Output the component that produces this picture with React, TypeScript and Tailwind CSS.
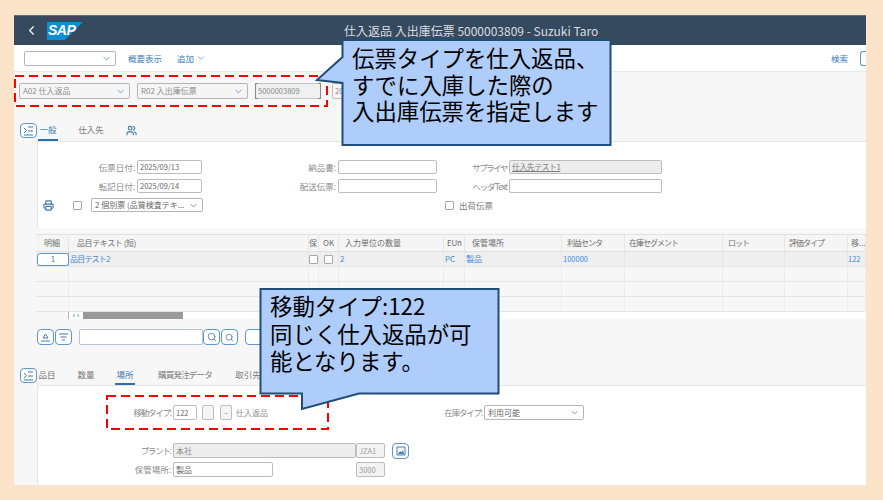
import { ChevronDown, ChevronLeft, Printer, Search, Users } from "lucide-react";

const cjk = "font-['Noto_Sans_CJK_JP','Noto_Sans',sans-serif]";

function Select({ value, className }: { value: string; className: string }) {
  return (
    <div className={`flex h-full shrink-0 items-center justify-between rounded-[2px] border border-[#b5b5b5] px-[3px] ${className}`}>
      <span className="truncate text-[8px] leading-[10px]">{value}</span>
      <ChevronDown className="h-[11px] w-[11px] shrink-0 text-[#427cac]" strokeWidth={1.5} />
    </div>
  );
}

function Input({ value, className, link, num }: { value?: string; className: string; link?: boolean; num?: boolean }) {
  return (
    <div className={`flex h-full shrink-0 items-center rounded-[2px] border border-[#bdbdbd] px-[2px] leading-none whitespace-nowrap ${num ? "text-[7.5px]" : "text-[8px]"} ${className}`}>
      <span className={link ? "tracking-[-0.6px] underline" : ""}>{value}</span>
    </div>
  );
}

function Label({ text, className }: { text: string; className: string }) {
  return <div className={`shrink-0 pr-[2px] text-right text-[8.5px] leading-none whitespace-nowrap text-[#8c8c8c] ${className}`}>{text}</div>;
}

function Check() {
  return <div className="h-[9px] w-[9px] shrink-0 rounded-[1px] border border-[#a8a8a8] bg-white" />;
}

function IconButton({ children, className }: { children: React.ReactNode; className: string }) {
  return (
    <div className={`flex shrink-0 items-center justify-center rounded-[4px] border border-[#5f97c9] bg-white text-[#427cac] ${className}`}>
      {children}
    </div>
  );
}

function CollapseButton() {
  return (
    <IconButton className="mt-[3px] h-[15px] w-[17px]">
      <svg width="11" height="10" viewBox="0 0 11 10" fill="none" stroke="currentColor" strokeWidth="1">
        <path d="M1 2l2.5 2.5L1 7M5 1h5M5 5h5M1 9h9" />
      </svg>
    </IconButton>
  );
}

function Tab({ text, active, className }: { text: string; active?: boolean; className: string }) {
  return (
    <div className={`flex h-full shrink-0 items-center justify-center border-b-2 text-[8.5px] leading-none whitespace-nowrap ${active ? "border-[#2a6fb0]" : "border-transparent"} ${className}`}>
      {text}
    </div>
  );
}

const colWidths = [
  "w-[33px] border-r border-[#b4b4b4]",
  "w-[240px]",
  "w-[10px]",
  "w-[20px]",
  "w-[105px]",
  "w-[21px]",
  "w-[97px]",
  "w-[63px]",
  "w-[98px]",
  "w-[62px]",
  "w-[63px]",
  "w-[18px]",
];

const headers: [string, string][] = [
  ["明細", "justify-center"],
  ["品目テキスト (短)", "pl-[8px] tracking-[-0.4px]"],
  ["保", "overflow-hidden"],
  ["OK", "pl-[4px]"],
  ["入力単位の数量", "pl-[6px]"],
  ["EUn", "pl-[3px] tracking-[-0.3px]"],
  ["保管場所", "pl-[7px]"],
  ["利益センタ", "pl-[5px] tracking-[-1px]"],
  ["在庫セグメント", "pl-[4px] tracking-[-1px]"],
  ["ロット", "pl-[5px] tracking-[-1px]"],
  ["評価タイプ", "pl-[4px] tracking-[-1px]"],
  ["移...", "pl-[3px] overflow-hidden"],
];

function EmptyRow() {
  return (
    <div className="flex h-[15px] border-b border-[#e6e6e6] bg-[#f7f7f7]">
      {colWidths.map((w, i) => (
        <div key={i} className={`${w} border-r border-[#ececec]`} />
      ))}
    </div>
  );
}

function ItemRow() {
  const cells: React.ReactNode[] = [
    <div className="mr-[-1px] ml-[1px] flex h-[13px] w-[32px] items-center justify-center rounded-[3px] border border-[#5f97c9] bg-white text-[#427cac]">1</div>,
    <span className="pl-[1px] tracking-[-0.8px]">品目テスト2</span>,
    <Check />,
    <div className="pl-[5px]"><Check /></div>,
    <span className="pl-[1px]">2</span>,
    <span className="pl-[1px]">PC</span>,
    <span className="pl-[1px]">製品</span>,
    <span className="pl-[1px] text-[7.5px]">100000</span>,
    null,
    null,
    null,
    <span className="text-[7.5px]">122</span>,
  ];
  return (
    <div className="flex h-[15px] border-b border-[#e6e6e6] bg-[#efefef] text-[8px] leading-none text-[#3f8bd6]">
      {cells.map((c, i) => (
        <div key={i} className={`flex items-center ${colWidths[i]} ${i > 0 ? "border-r border-[#e6e6e6]" : ""}`}>
          {c}
        </div>
      ))}
    </div>
  );
}

function Table() {
  return (
    <div className="mt-[6px] ml-[22px] h-[85px] shrink-0 border-t border-[#e2e2e2]">
      <div className="flex h-[17px] border-b border-[#e2e2e2] bg-[#f5f5f5] text-[8px] leading-none text-[#6f6f6f]">
        {headers.map(([text, cls], i) => (
          <div key={i} className={`flex items-center whitespace-nowrap ${colWidths[i]} ${cls} border-r border-[#e6e6e6]`}>
            {text}
          </div>
        ))}
      </div>
      <ItemRow />
      <EmptyRow />
      <EmptyRow />
      <EmptyRow />
      <div className="flex h-[7px] items-center bg-white">
        <div className="h-full w-[33px] border-r border-[#b4b4b4] bg-[#f7f7f7]" />
        <div className="flex w-[14px] justify-center gap-[2px] text-[7px] leading-none font-bold text-[#427cac]">
          <span>‹</span>
          <span>›</span>
        </div>
        <div className="h-full w-[100px] bg-[#999999]" />
      </div>
    </div>
  );
}

function TableToolbar() {
  return (
    <div className="mt-[10px] ml-[23px] flex h-[16px] shrink-0">
      <IconButton className="w-[17px]">
        <svg width="11" height="9" viewBox="0 0 11 9" fill="none" stroke="currentColor"><path d="M5.5 1L3 5h5zM1 8h9" /></svg>
      </IconButton>
      <IconButton className="ml-[1px] w-[17px]">
        <svg width="11" height="9" viewBox="0 0 11 9" fill="none" stroke="currentColor"><path d="M1 1h9M2.5 4h6M4 7h3" /></svg>
      </IconButton>
      <div className="ml-[7px] w-[124px] rounded-[2px] border border-[#b8c4d0] bg-white" />
      <IconButton className="w-[17px]"><Search className="h-[10px] w-[10px]" /></IconButton>
      <IconButton className="ml-[1px] w-[17px]"><Search className="h-[9px] w-[9px]" /></IconButton>
      <IconButton className="ml-[7px] w-[40px]"><span /></IconButton>
    </div>
  );
}

// annotations that sit over the form
function RedBox({ className, w, h }: { className: string; w: number; h: number }) {
  return (
    <svg className={`absolute ${className}`} width={w} height={h} fill="none">
      <rect x="1" y="1" width={w - 2} height={h - 2} stroke="#ff0000" strokeWidth="2" strokeDasharray="9 5" />
    </svg>
  );
}

function Callouts() {
  return (
    <>
      <svg className="absolute top-0 left-0" width="883" height="500" fill="#afcdfa" stroke="#1f4e79" strokeWidth="2">
        <path d="M342.5 40H610.5V145H342.5V83L317 80L342.5 57Z" />
        <path d="M260.5 289H498.5V393.5H359L302 409V393.5H260.5Z" />
      </svg>
      <div className={`absolute top-[44px] left-[352px] text-[22.4px] leading-[26.5px] whitespace-nowrap text-black ${cjk}`}>
        <div>伝票タイプを仕入返品、</div>
        <div>すでに入庫した際の</div>
        <div>入出庫伝票を指定します</div>
      </div>
      <div className={`absolute top-[292px] left-[270px] text-[22.4px] leading-[27.5px] whitespace-nowrap text-black ${cjk}`}>
        <div>移動タイプ:122</div>
        <div>同じく仕入返品が可</div>
        <div>能となります。</div>
      </div>
    </>
  );
}

export default function App() {
  return (
    <div className={`relative h-[500px] w-[883px] overflow-hidden bg-[#fce4ca] pt-[15px] pl-[14px] ${cjk}`}>
      <div className="flex h-[470px] w-[852px] flex-col overflow-hidden bg-[#f7f7f7]">
        {/* shell bar */}
        <div className="flex h-[30px] shrink-0 items-center border-t border-[#5a6e82] bg-[#354a5f] text-white">
          <ChevronLeft className="ml-[10px] h-[15px] w-[15px]" strokeWidth={1.75} />
          <div className="relative ml-[8px] h-[18px] w-[36px]">
            <svg className="absolute inset-0" width="36" height="18" viewBox="0 0 36 18">
              <path d="M0 0H36L18 18H0Z" fill="#0a8ed6" />
            </svg>
            <span className="absolute top-[1px] left-[1px] font-['Liberation_Sans',sans-serif] text-[14px] leading-[15px] font-bold tracking-[-0.5px] italic">SAP</span>
          </div>
          <div className="ml-[261px] text-[12px] leading-none whitespace-nowrap text-[#d8dee4]">仕入返品 入出庫伝票 5000003809 - Suzuki Taro</div>
        </div>

        {/* toolbar */}
        <div className="flex h-[27px] shrink-0 items-center border-b border-[#e8e8e8] bg-white pl-[10px] text-[8.5px] leading-none whitespace-nowrap text-[#3f7fc0]">
          <Select value="" className="h-[15px]! w-[92px] bg-white" />
          <span className="ml-[12px] shrink-0">概要表示</span>
          <span className="ml-[15px] shrink-0">追加</span>
          <ChevronDown className="ml-[2px] h-[10px] w-[10px] shrink-0" strokeWidth={1.5} />
          <span className="ml-[625px] shrink-0">検索</span>
          <div className="ml-[12px] h-[15px] w-[10px] shrink-0 rounded-l-[3px] border-y border-l border-[#5f97c9]" />
        </div>

        {/* document header */}
        <div className="flex h-[48px] shrink-0 pt-[11px] pl-[5px] text-[#8c8c8c]">
          <div className="flex h-[16px]">
            <Select value="A02 仕入返品" className="w-[111px] bg-[#f5f5f5]" />
            <Select value="R02 入出庫伝票" className="ml-[7px] w-[111px] bg-[#f5f5f5]" />
            <div className="relative ml-[7px] w-[66px] shrink-0">
              <Input value="5000003809" num className="w-full border-[#c4c4c4] bg-[#f0f0f0]" />
              <span className="absolute top-0 left-0 h-full w-[3px] border-y border-l border-[#8c8c8c]" />
              <span className="absolute top-0 right-0 h-full w-[3px] border-y border-r border-[#8c8c8c]" />
            </div>
            <Input value="20" num className="ml-[11px] w-[30px] bg-[#f5f5f5]" />
          </div>
        </div>

        {/* upper tabs */}
        <div className="flex h-[21px] shrink-0 items-start pl-[6px] text-[#7a7a7a]">
          <CollapseButton />
          <div className="flex h-full items-stretch">
            <Tab text="一般" active className="ml-[1px] w-[20px] text-[#427cac]" />
            <Tab text="仕入先" className="ml-[20px] w-[26px]" />
            <div className="ml-[22px] flex items-center"><Users className="h-[11px] w-[11px] text-[#427cac]" strokeWidth={2.5} /></div>
          </div>
        </div>

        {/* general panel */}
        <div className="ml-[23px] flex h-[87px] shrink-0 flex-col gap-[5px] border-t border-l border-[#e6e6e6] bg-white pt-[18px] text-[#666666]">
          <div className="flex h-[14px] items-center">
            <Label text="伝票日付:" className="w-[99px]" />
            <Input value="2025/09/13" num className="w-[65px]" />
            <Label text="納品書:" className="w-[136px]" />
            <Input className="w-[99px]" />
            <Label text="サプライヤ" className="w-[72px] tracking-[-1.5px]" />
            <Input value="仕入先テスト1" link className="w-[153px] bg-[#ededed] text-[#7d7d7d]" />
          </div>
          <div className="flex h-[14px] items-center">
            <Label text="転記日付:" className="w-[99px]" />
            <Input value="2025/09/14" num className="w-[65px]" />
            <Label text="配送伝票:" className="w-[136px]" />
            <Input className="w-[99px]" />
            <Label text="ヘッダText" className="w-[72px] tracking-[-1px]" />
            <Input className="w-[153px]" />
          </div>
          <div className="flex h-[14px] items-center">
            <Printer className="ml-[5px] h-[11px] w-[11px] text-[#427cac]" strokeWidth={2.5} />
            <div className="ml-[19px]"><Check /></div>
            <Select value="2 個別票 (品質検査テキ..." className="ml-[9px] w-[112px]" />
            <div className="ml-[242px]"><Check /></div>
            <span className="ml-[5px] text-[8.5px] leading-none text-[#7a7a7a]">出荷伝票</span>
          </div>
        </div>

        <Table />
        <TableToolbar />

        {/* lower tabs */}
        <div className="mt-[20px] flex h-[20px] shrink-0 items-start pl-[6px] text-[#7a7a7a]">
          <CollapseButton />
          <div className="flex h-full items-stretch">
            <Tab text="品目" className="ml-[1px] w-[18px]" />
            <Tab text="数量" className="ml-[21px] w-[18px]" />
            <Tab text="場所" active className="ml-[20px] w-[20px] text-[#427cac]" />
            <Tab text="購買発注データ" className="ml-[23px] w-[54px] tracking-[-0.8px]" />
            <Tab text="取引先" className="ml-[23px] w-[26px]" />
          </div>
        </div>

        {/* item panel */}
        <div className="ml-[23px] flex min-h-0 flex-1 flex-col border-t border-l border-[#e6e6e6] bg-white pt-[19px] text-[#666666]">
          <div className="flex h-[15px] items-center">
            <Label text="移動タイプ:" className="w-[135px] tracking-[-1.2px]" />
            <Input value="122" num className="w-[24px]" />
            <Input className="ml-[5px] w-[12px] bg-[#f5f5f5]" />
            <Input value="-" className="ml-[6px] w-[12px] justify-center bg-[#f5f5f5]" />
            <span className="ml-[4px] w-[34px] shrink-0 text-[8px] leading-none whitespace-nowrap text-[#8c8c8c]">仕入返品</span>
            <Label text="在庫タイプ:" className="w-[214px] tracking-[-1.2px]" />
            <Select value="利用可能" className="w-[100px] bg-white" />
          </div>
          <div className="mt-[23px] flex h-[15px] items-center">
            <Label text="プラント:" className="w-[135px] tracking-[-1.2px]" />
            <Input value="本社" className="w-[183px] bg-[#ededed] text-[#8c8c8c]" />
            <Input value="JZA1" num className="w-[29px] bg-[#f3f3f3] text-[#9a9a9a]" />
            <IconButton className="ml-[7px] h-[16px] w-[17px]">
              <svg width="10" height="10" viewBox="0 0 10 10"><path d="M1 1h8v8H1z" fill="none" stroke="currentColor" /><path d="M2 8l2-3 1.5 1.5L7 4l1 4z" fill="currentColor" /></svg>
            </IconButton>
          </div>
          <div className="mt-[4px] flex h-[15px] items-center">
            <Label text="保管場所:" className="w-[135px]" />
            <Input value="製品" className="w-[100px]" />
            <Input value="3000" num className="ml-[83px] w-[29px] bg-[#f3f3f3] text-[#9a9a9a]" />
          </div>
        </div>
      </div>

      <RedBox className="top-[75px] left-[14px]" w={314} h={32} />
      <RedBox className="top-[395px] left-[106px]" w={223} h={35} />
      <Callouts />
    </div>
  );
}
